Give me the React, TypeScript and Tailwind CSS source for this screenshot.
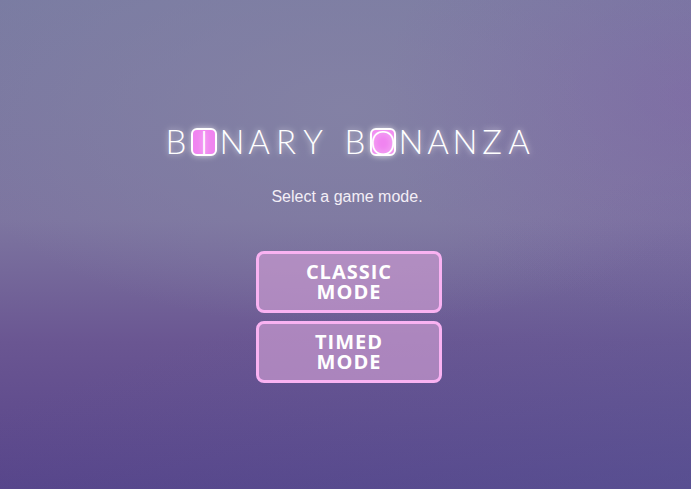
import React from "react";

const TITLE = "BINARY BONANZA";
const BOXED = [1, 8]; // I and O

function Title() {
  return (
    <h1
      className="flex items-center justify-center text-[33px] font-light text-white leading-none font-['Lato',sans-serif]"
      style={{ textShadow: "0 0 6px rgba(255,255,255,0.7)" }}
    >
      {TITLE.split("").map((ch, i) =>
        BOXED.includes(i) ? (
          <span key={i} className="mx-[1.5px] inline-flex h-[28px] w-[26px] items-center justify-center rounded-[6px] border-2 border-white bg-[#f084f0] pt-[1px] text-[33px] shadow-[0_0_6px_rgba(255,255,255,0.6)]">
            {ch}
          </span>
        ) : (
          <span key={i} className={ch === " " ? "w-[15px]" : "inline-block w-[27px] text-center"}>
            {ch}
          </span>
        )
      )}
    </h1>
  );
}

function ModeButton({ label }: { label: string }) {
  return (
    <button className="flex h-[62px] w-[186px] flex-col items-center justify-center rounded-[8px] border-[3px] border-[#f9b2f2] bg-[#c99ad0]/70 text-[20px] font-bold leading-[20px] tracking-[1px] text-white font-['Open_Sans',sans-serif]">
      {label.split(" ").map(w => (
        <span key={w} className="block h-[20px]">{w}</span>
      ))}
    </button>
  );
}

export default function App() {
  return (
    <div
      className="relative flex h-[489px] w-[691px] flex-col items-center overflow-hidden bg-[#6e5f96]"
      style={{
        background:
          "radial-gradient(ellipse 60% 45% at 50% 22%, rgba(132,130,165,0.9), rgba(132,130,165,0) 100%), linear-gradient(to bottom, #7a7ca2 0%, #7d75a0 45%, #6a5692 70%, #574389 100%)",
      }}
    >
      <div className="pointer-events-none absolute inset-0 bg-[linear-gradient(160deg,rgba(0,0,0,0)_55%,rgba(90,100,160,0.35)_100%)]" />
      <div className="pointer-events-none absolute inset-0 bg-[radial-gradient(ellipse_45%_45%_at_100%_20%,rgba(130,90,170,0.35),rgba(0,0,0,0))]" />
      <div className="relative ml-[4px] mt-[125px]">
        <Title />
      </div>
      <p className="relative ml-[3px] mt-[27px] text-[16px] text-[#f3eef6] font-['Liberation_Sans',sans-serif]">Select a game mode.</p>
      <div className="relative ml-[7px] mt-[42px] flex flex-col gap-[8px]">
        <ModeButton label="CLASSIC MODE" />
        <ModeButton label="TIMED MODE" />
      </div>
    </div>
  );
}
